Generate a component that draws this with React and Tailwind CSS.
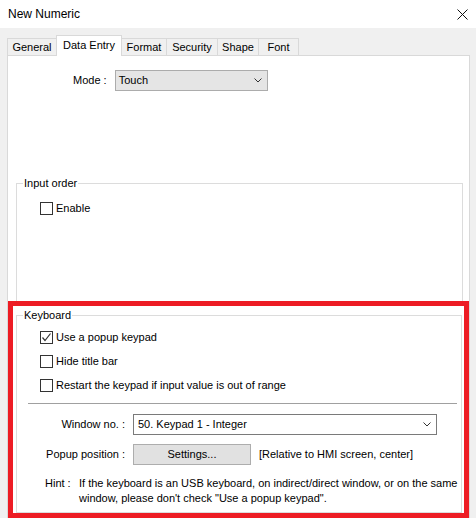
import React from "react";

const font = { fontFamily: '"Liberation Sans", Arial, sans-serif' };

function Chevron() {
  return (
    <svg width="8" height="5" viewBox="0 0 8 5" className="shrink-0">
      <path d="M0.5 0.5 L4 4 L7.5 0.5" fill="none" stroke="#333" strokeWidth="1" />
    </svg>
  );
}

function CheckBox({ checked, label }) {
  return (
    <div className="flex items-center h-[13px]">
      <div className="w-[13px] h-[13px] border border-[#333] bg-white shrink-0 flex items-center justify-center">
        {checked && (
          <svg width="11" height="11" viewBox="0 0 11 11">
            <path d="M1.5 5.5 L4 8.5 L9.5 1.5" fill="none" stroke="#333" strokeWidth="1.2" />
          </svg>
        )}
      </div>
      <span className="ml-[3px] leading-[13px]">{label}</span>
    </div>
  );
}

const tabs = [
  { name: "General", w: "w-[49px]" },
  { name: "Data Entry", w: "w-[66px]", active: true },
  { name: "Format", w: "w-[44px]" },
  { name: "Security", w: "w-[51px]" },
  { name: "Shape", w: "w-[41px]" },
  { name: "Font", w: "w-[41px]" },
];

export default function App() {
  return (
    <div className="relative w-[476px] h-[518px] overflow-hidden bg-[#f0f0f0] text-[11px] text-black" style={font}>
      {/* title bar */}
      <div className="h-[28px] bg-white flex items-center justify-between pl-[8px] pr-[8px]">
        <span className="text-[12px]">New Numeric</span>
        <svg width="11" height="11" viewBox="0 0 11 11">
          <path d="M0.5 0.5 L10.5 10.5 M10.5 0.5 L0.5 10.5" stroke="#111" strokeWidth="1" />
        </svg>
      </div>

      <div className="pl-[7px] pt-[7px]">
        {/* tabs */}
        <div className="flex items-end h-[21px] relative z-10">
          {tabs.map((t, i) =>
            t.active ? (
              <div
                key={t.name}
                className={`${t.w} h-[21px] bg-white border-x border-t border-[#d9d9d9] flex items-center justify-center pb-[2px]`}
              >
                {t.name}
              </div>
            ) : (
              <div
                key={t.name}
                className={`${t.w} h-[18px] border-t border-[#d9d9d9] ${i === tabs.length - 1 ? "border-r" : ""} ${
                  i === 0 || !tabs[i - 1].active ? "border-l" : ""
                } flex items-center justify-center`}
              >
                {t.name}
              </div>
            )
          )}
        </div>

        {/* panel */}
        <div className="w-[463px] h-[480px] -mt-px bg-white border border-[#d9d9d9] pl-[8px]">
          <div className="flex items-center mt-[14px] pl-[57px]">
            <span>Mode :</span>
            <div className="ml-[8px] w-[153px] h-[21px] bg-[#e5e5e5] border border-[#acacac] flex items-center justify-between pl-[3px] pr-[5px]">
              <span>Touch</span>
              <Chevron />
            </div>
          </div>

          <fieldset className="mt-[85px] w-[447px] h-[130px] border border-[#dcdcdc]">
            <legend className="ml-[6px] px-[1px] leading-[14px]">Input order</legend>
            <div className="mt-[12px] pl-[23px]">
              <CheckBox label="Enable" />
            </div>
          </fieldset>

          <fieldset className="mt-[2px] w-[446px] h-[205px] border border-[#dcdcdc]">
            <legend className="ml-[6px] px-[1px] leading-[14px]">Keyboard</legend>
            <div className="pl-[23px] mt-[9px] flex flex-col gap-[11px]">
              <CheckBox checked label="Use a popup keypad" />
              <CheckBox label="Hide title bar" />
              <CheckBox label="Restart the keypad if input value is out of range" />
            </div>
            <div className="ml-[11px] mt-[11px] w-[429px] h-px bg-[#a0a0a0]" />

            <div className="flex items-center mt-[10px]">
              <span className="w-[108px] text-right">Window no. :</span>
              <div className="ml-[8px] w-[304px] h-[21px] bg-white border border-[#7a7a7a] flex items-center justify-between pl-[4px] pr-[5px]">
                <span>50. Keypad 1 - Integer</span>
                <Chevron />
              </div>
            </div>

            <div className="flex items-center mt-[9px]">
              <span className="w-[108px] text-right">Popup position :</span>
              <div className="ml-[8px] w-[118px] h-[21px] bg-[#e1e1e1] border border-[#adadad] flex items-center justify-center">
                Settings...
              </div>
              <span className="ml-[8px]">[Relative to HMI screen, center]</span>
            </div>

            <div className="flex mt-[11px] leading-[15px] pl-[28px]">
              <span className="w-[34px] shrink-0">Hint :</span>
              <span>
                If the keyboard is an USB keyboard, on indirect/direct window, or on the same
                <br />
                window, please don't check "Use a popup keypad".
              </span>
            </div>
          </fieldset>
        </div>
      </div>

      {/* red annotation frame */}
      <div className="absolute left-[8px] top-[301px] w-[461px] h-[217px] border-[5px] border-[#ed1c24] pointer-events-none" />
    </div>
  );
}
